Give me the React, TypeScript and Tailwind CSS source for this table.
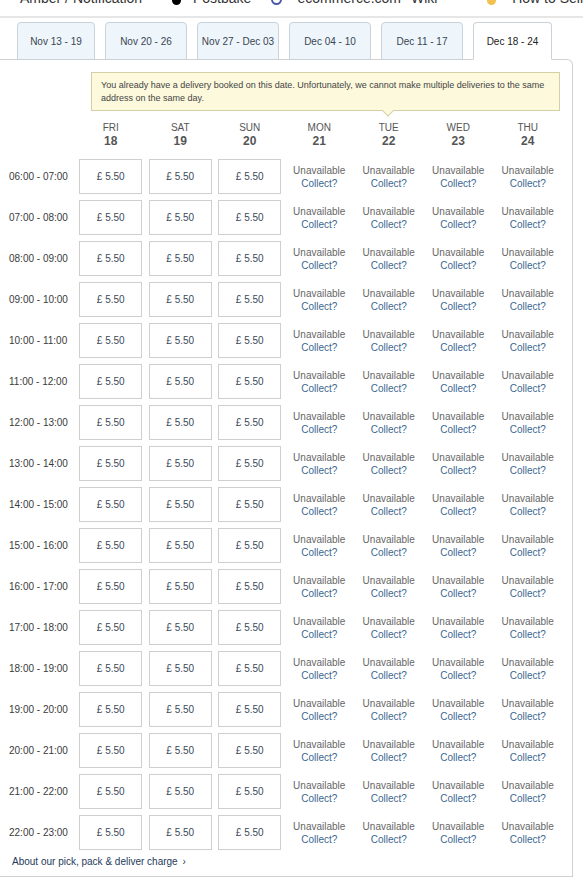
import React from "react";

const tabs = [
  { label: "Nov 13 - 19", w: "w-[78px]" },
  { label: "Nov 20 - 26", w: "w-[82px]" },
  { label: "Nov 27 - Dec 03", w: "w-[82px]" },
  { label: "Dec 04 - 10", w: "w-[82px]" },
  { label: "Dec 11 - 17", w: "w-[82px]" },
  { label: "Dec 18 - 24", w: "w-[79px]", active: true },
];

const days = [
  { name: "FRI", num: 18, open: true },
  { name: "SAT", num: 19, open: true },
  { name: "SUN", num: 20, open: true },
  { name: "MON", num: 21 },
  { name: "TUE", num: 22 },
  { name: "WED", num: 23 },
  { name: "THU", num: 24 },
];

const pad = (n: number) => String(n).padStart(2, "0");
const slots = Array.from({ length: 17 }, (_, i) => `${pad(6 + i)}:00 - ${pad(7 + i)}:00`);

export default function App() {
  return (
    <div className="w-[583px] h-[880px] bg-white overflow-hidden font-['Liberation_Sans',Arial,sans-serif] text-[#333]">
      {/* cut-off site nav */}
      <div className="h-[18px] overflow-hidden border-b-2 border-[#e6e6e6] relative">
        <div className="flex items-center -mt-[11px] h-[18px] text-[14px] text-[#333] whitespace-nowrap">
          <span className="ml-[20px]">Amber / Notification</span>
          <span className="ml-[30px] w-[14px] h-[14px] rounded-full bg-black" />
          <span className="ml-[12px]">Postbake</span>
          <span className="ml-[20px] w-[14px] h-[14px] rounded-full border-2 border-[#4a5aa8]" />
          <span className="ml-[16px]">ecommerce.com</span>
          <span className="ml-[10px]">Wiki</span>
          <span className="ml-[50px] w-[14px] h-[14px] rounded-full bg-[#f2c14e]" />
          <span className="ml-[16px]">How to Sell</span>
        </div>
      </div>

      {/* week tabs */}
      <div className="flex gap-[10px] pl-[17px] mt-[4px] relative z-10">
        {tabs.map((t) => (
          <div
            key={t.label}
            className={`${t.w} h-[38px] flex items-center justify-center text-[10px] border border-[#c9d2da] rounded-t-[4px] ${
              t.active ? "bg-white border-b-white text-[#222]" : "bg-[#eef5fb] text-[#3a4652]"
            }`}
          >
            {t.label}
          </div>
        ))}
      </div>

      {/* panel */}
      <div className="w-[573px] h-[818px] -mt-px border-t border-r border-b border-[#d0d0d0] rounded-tr-[6px]">
        <div className="relative ml-[91px] mt-[12px] w-[469px] h-[39px] bg-[#fdf9dc] border border-[#d5cfa6] px-[9px] pt-[6px] text-[9px] leading-[13px] text-[#444] whitespace-nowrap">
          You already have a delivery booked on this date. Unfortunately, we cannot make multiple deliveries to the same
          <br />
          address on the same day.
          <div className="absolute left-[292px] -bottom-[5px] w-[8px] h-[8px] rotate-45 bg-[#fdf9dc] border-r border-b border-[#d5cfa6]" />
        </div>

        <div className="grid grid-cols-[76px_repeat(7,69.5px)] mt-[10px]">
          <div />
          {days.map((d) => (
            <div key={d.name} className="flex flex-col items-center text-[#555]">
              <span className="text-[10px] leading-[13px]">{d.name}</span>
              <span className="text-[12px] font-bold leading-[14px]">{d.num}</span>
            </div>
          ))}
        </div>

        <div className="mt-[8px]">
          {slots.map((s) => (
            <div key={s} className="grid grid-cols-[76px_repeat(7,69.5px)] h-[41px] items-center">
              <span className="pl-[9px] text-[10px] text-[#3a3a3a]">{s}</span>
              {days.map((d) =>
                d.open ? (
                  <div key={d.name} className="flex justify-center">
                    <div className="w-[63px] h-[35px] border border-[#cfcfcf] flex items-center justify-center text-[10px] text-[#3b4a5a]">
                      £ 5.50
                    </div>
                  </div>
                ) : (
                  <div key={d.name} className="flex flex-col items-center text-[10px] leading-[13px]">
                    <span className="text-[#666]">Unavailable</span>
                    <span className="text-[#3b6790]">Collect?</span>
                  </div>
                )
              )}
            </div>
          ))}
        </div>

        <div className="pl-[12px] mt-[1px] text-[10px] text-[#1e3a5a]">
          About our pick, pack &amp; deliver charge <span className="ml-[2px]">›</span>
        </div>
      </div>
    </div>
  );
}
